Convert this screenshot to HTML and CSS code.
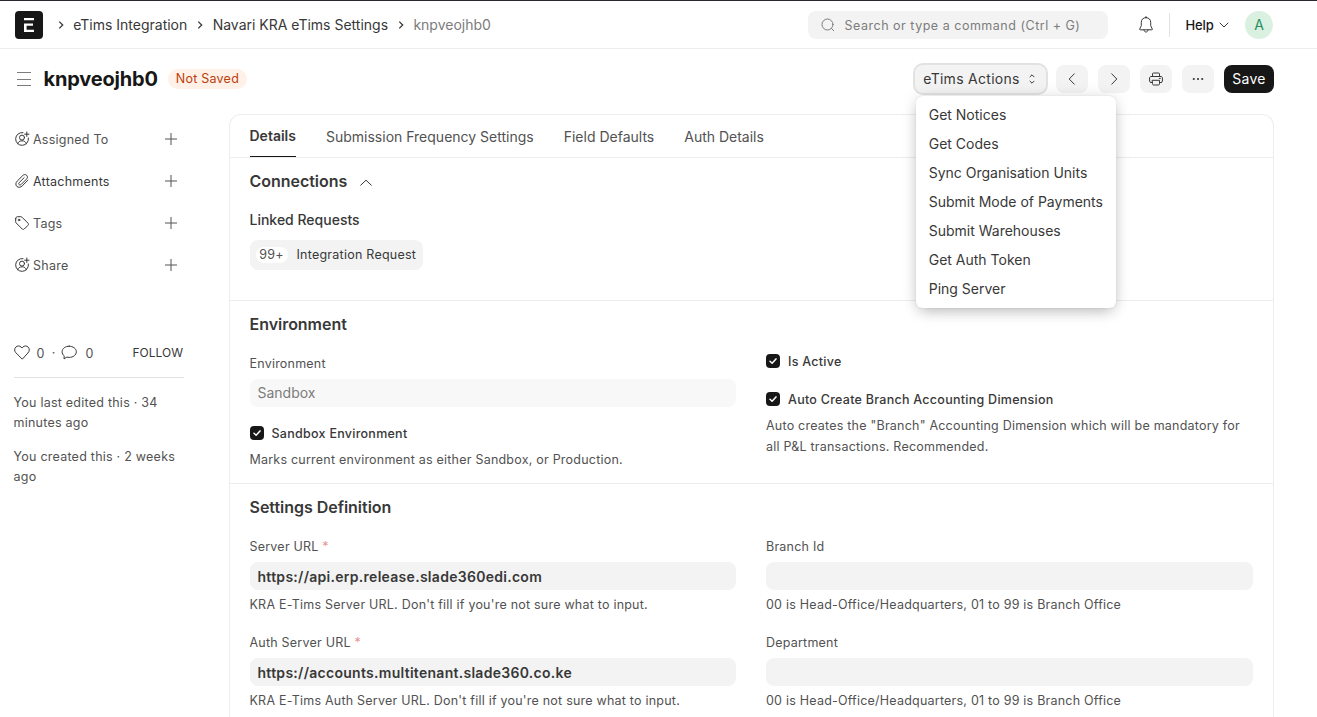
FILE: index.html
```html
<!DOCTYPE html>
<html lang="en">
<head>
<meta charset="utf-8">
<title>knpveojhb0</title>
<link rel="stylesheet" href="styles.css">
</head>
<body>
<svg class="defs" aria-hidden="true">
  <symbol id="chev" viewBox="0 0 16 16"><path d="M6.3 4.6 9.7 8l-3.4 3.4"/></symbol>
  <symbol id="plus" viewBox="0 0 14 14"><path d="M7 1v12M1 7h12"/></symbol>
  <symbol id="assign" viewBox="0 0 16 16"><path d="M9 1.6A6.4 6.4 0 1 0 14.4 7M12.8 1v4.4M10.6 3.2H15M3.6 12.8c.5-1.9 2.200-3 4.400-3s3.900 1.100 4.400 3"/><circle cx="8" cy="6.6" r="2.500"/></symbol>
  <symbol id="check" viewBox="0 0 14 14"><path d="m4 7.300 2.100 2L10 4.900"/></symbol>
</svg>
<header class="navbar">
  <div class="container nav-row">
    <svg class="logo" viewBox="0 0 28 28"><rect width="28" height="28" rx="4" fill="#171717"/><path d="M9 7h10v2.300H9zM9 12.400h9v2.300h-6.400v4H19V21H9z" fill="#fff"/></svg>
    <nav class="crumbs">
      <svg class="sep"><use href="#chev"/></svg><a>eTims Integration</a>
      <svg class="sep"><use href="#chev"/></svg><a>Navari KRA eTims Settings</a>
      <svg class="sep"><use href="#chev"/></svg><a class="current">knpveojhb0</a>
    </nav>
    <div class="search">
      <svg class="line" width="14" height="14" viewBox="0 0 14 14"><circle cx="6.500" cy="6.500" r="5.500"/><path d="m10.500 10.500 2.200 2.200"/></svg>
      <span>Search or type a command (Ctrl + G)</span>
    </div>
    <svg class="line bell" width="16" height="18" viewBox="0 0 16 18"><path d="M8 1.600c-3 0-4.700 2-4.700 4.800v3.200L1.700 13c-.2.500 0 .8.500.8h11.600c.5 0 .7-.3.500-.8l-1.600-3.400V6.400C12.700 3.600 11 1.600 8 1.600zM6 14c.2 1.300.9 2 2 2s1.800-.7 2-2M8 .6v1"/></svg>
    <div class="vline"></div>
    <div class="help">Help <svg class="line" width="10" height="6" viewBox="0 0 10 6"><path d="m1 1 4 4 4-4"/></svg></div>
    <div class="avatar">A</div>
  </div>
</header>

<div class="container page-head">
  <svg class="menu-icon" width="14" height="14" viewBox="0 0 14 14"><path d="M0 .5h14M0 7.500h14M0 13.500h14"/></svg>
  <h1>knpveojhb0</h1>
  <span class="pill">Not Saved</span>
  <div class="actions">
    <div class="dropdown">
      <button class="btn btn-open"><span>eTims Actions</span><svg class="line" width="8" height="10" viewBox="0 0 8 10"><path d="m2 2.800 2-2 2 2M2 7.200l2 2 2-2"/></svg></button>
      <ul class="menu">
        <li>Get Notices</li><li>Get Codes</li><li>Sync Organisation Units</li><li>Submit Mode of Payments</li><li>Submit Warehouses</li><li>Get Auth Token</li><li>Ping Server</li>
      </ul>
    </div>
    <button class="btn icon"><svg class="line" width="14" height="14" viewBox="0 0 14 14"><path d="M9.300 1.800 4.200 7l5.100 5.200"/></svg></button>
    <button class="btn icon"><svg class="line" width="14" height="14" viewBox="0 0 14 14"><path d="M4.700 1.800 9.800 7l-5.100 5.200"/></svg></button>
    <button class="btn icon"><svg class="line" width="14" height="14" viewBox="0 0 14 14"><path d="M3.500 4.500V2c0-.6.3-1 1-1h5c.7 0 1 .4 1 1v2.500M3.500 10.500H2c-.8 0-1.400-.5-1.400-1.300V6c0-.9.600-1.500 1.400-1.500h10c.8 0 1.400.6 1.400 1.500v3.200c0 .8-.6 1.300-1.400 1.300h-1.500M3.500 8.300h7v3.600c0 .6-.4 1.100-1 1.100h-5c-.6 0-1-.5-1-1.100zM10.300 6.400h1"/></svg></button>
    <button class="btn icon"><svg width="12" height="4" viewBox="0 0 12 4" fill="#383838"><circle cx="1.800" cy="2" r="1.100"/><circle cx="6" cy="2" r="1.100"/><circle cx="10.200" cy="2" r="1.100"/></svg></button>
    <button class="btn primary"><span>Save</span></button>
  </div>
</div>

<div class="container body">
  <aside>
    <div class="side-row"><svg class="line" width="16" height="16"><use href="#assign"/></svg><span>Assigned To</span><svg class="plus"><use href="#plus"/></svg></div>
    <div class="side-row dark"><svg class="line" width="16" height="16" viewBox="0 0 16 16"><path d="M13.900 7.200 8.200 12.900c-1.600 1.600-4 1.900-5.400.5s-1.200-3.700.4-5.300l5.600-5.600c1.100-1.100 2.800-1.300 3.900-.2s.9 2.700-.2 3.800l-5.400 5.400c-.6.600-1.500.7-2 .1s-.5-1.400.1-2l4.900-4.900"/></svg><span>Attachments</span><svg class="plus"><use href="#plus"/></svg></div>
    <div class="side-row"><svg class="line" width="16" height="16" viewBox="0 0 16 16"><path d="M1.700 3.500v3.300c0 .5.200.9.500 1.200l6 6c.6.600 1.500.6 2.100 0l3.700-3.700c.6-.6.600-1.500 0-2.100l-6-6c-.3-.3-.700-.5-1.200-.5H3.500c-1 0-1.800.8-1.800 1.800z"/><circle cx="5" cy="5" r=".8"/></svg><span>Tags</span><svg class="plus"><use href="#plus"/></svg></div>
    <div class="side-row"><svg class="line" width="16" height="16"><use href="#assign"/></svg><span>Share</span><svg class="plus"><use href="#plus"/></svg></div>
    <div class="social">
      <svg class="line" width="16" height="15" viewBox="0 0 16 15"><path d="M8 13.900 1.800 7.700C.3 6.100.3 3.600 1.800 2.100s3.900-1.500 5.400 0l.8.900.8-.9c1.500-1.500 3.900-1.500 5.400 0s1.500 4 0 5.600z"/></svg>
      <span class="likes">0</span><span class="dot">·</span>
      <svg class="line" width="16" height="15" viewBox="0 0 16 15"><path d="M8.200 1.200c4 0 7.100 2.400 7.100 5.600s-3.100 5.600-7.100 5.600c-.8 0-1.600-.1-2.300-.3L3 13.900l.2-3.100C1.800 9.800 1.100 8.400 1.100 6.800c0-3.200 3.100-5.600 7.100-5.600z"/></svg>
      <span class="comments">0</span><span class="follow">FOLLOW</span>
    </div>
    <p>You last edited this · 34 minutes ago</p>
    <p>You created this · 2 weeks ago</p>
  </aside>

  <main class="card">
    <div class="tabs"><a class="active">Details</a><a>Submission Frequency Settings</a><a>Field Defaults</a><a>Auth Details</a></div>
    <section class="connections">
      <h2>Connections <svg class="line" width="12" height="7" viewBox="0 0 12 7"><path d="m.7 6.200 5.300-5 5.300 5"/></svg></h2>
      <h3>Linked Requests</h3>
      <div class="doc-link"><span class="count">99+</span><span class="doc-name">Integration Request</span></div>
    </section>
    <section class="environment">
      <h2>Environment</h2>
      <div class="cols">
        <div>
          <label>Environment</label>
          <div class="input disabled">Sandbox</div>
          <div class="checkline first"><svg class="check"><use href="#check"/></svg>Sandbox Environment</div>
          <div class="hint">Marks current environment as either Sandbox, or Production.</div>
        </div>
        <div class="checks">
          <div class="checkline"><svg class="check"><use href="#check"/></svg>Is Active</div>
          <div class="checkline second"><svg class="check"><use href="#check"/></svg>Auto Create Branch Accounting Dimension</div>
          <div class="hint">Auto creates the "Branch" Accounting Dimension which will be mandatory for all P&amp;L transactions. Recommended.</div>
        </div>
      </div>
    </section>
    <section class="settings">
      <h2>Settings Definition</h2>
      <div class="cols">
        <div><label>Server URL <i>*</i></label><div class="input">https://api.erp.release.slade360edi.com</div><div class="hint">KRA E-Tims Server URL. Don't fill if you're not sure what to input.</div></div>
        <div><label>Branch Id</label><div class="input"></div><div class="hint">00 is Head-Office/Headquarters, 01 to 99 is Branch Office</div></div>
        <div><label>Auth Server URL <i>*</i></label><div class="input">https://accounts.multitenant.slade360.co.ke</div><div class="hint">KRA E-Tims Auth Server URL. Don't fill if you're not sure what to input.</div></div>
        <div><label>Department</label><div class="input"></div><div class="hint">00 is Head-Office/Headquarters, 01 to 99 is Branch Office</div></div>
      </div>
    </section>
  </main>
</div>
</body>
</html>
```

FILE: styles.css
```css
* { box-sizing: border-box; }
html, body { height: 717px; overflow: hidden; }
body {
  margin: 0;
  border-top: 1px solid #2a272f;
  background: #fff;
  color: #383838;
  font: 400 14px/21px Inter, sans-serif;
  letter-spacing: 0;
}
h1, h2, h3, p, ul { margin: 0; padding: 0; }
.defs { position: absolute; width: 0; height: 0; }
svg { flex: none; }
.line { fill: none; stroke: #383838; stroke-linecap: round; stroke-linejoin: round; }
.container { margin-left: 15px; width: 1259px; }

.navbar { height: 48px; border-bottom: 1px solid #ededed; }
.nav-row { display: flex; align-items: center; height: 48px; }
.logo { width: 28px; height: 28px; }
.crumbs { display: flex; align-items: center; flex: 1; padding-left: 9.500px; white-space: nowrap; }
.crumbs a { margin-right: 4.700px; padding-bottom: 2px; }
.crumbs .current { color: #7c7c7c; }
.sep { width: 16px; height: 16px; margin-right: 4.700px; fill: none; stroke: #383838; stroke-width: 1.3; }
.search { display: flex; align-items: center; gap: 10px; width: 300px; height: 28px; padding-left: 12.500px; border-radius: 8px; background: #f3f3f3; color: #7c7c7c; font-size: 12.500px; letter-spacing: 0.51px; }
.search .line { stroke: #7c7c7c; }
.bell { margin: 0 0 0 30px; }
.vline { width: 1px; height: 24px; margin: 0 15.500px 0 15px; background: #e2e2e2; }
.help { display: flex; align-items: center; gap: 5px; width: 59.500px; font-size: 13px; font-weight: 500; color: #171717; letter-spacing: -0.1px; }
.avatar { width: 28px; height: 28px; margin-right: 1px; border-radius: 50%; background: #daf0e1; color: #278f5e; text-align: center; line-height: 28px; }

.page-head { display: flex; align-items: center; height: 60px; }
.menu-icon { margin-left: 2px; stroke: #7c7c7c; fill: none; }
h1 { margin-left: 12.500px; color: #171717; font-size: 20px; font-weight: 700; line-height: 24px; letter-spacing: -0.18px; }
.pill { margin-left: 10px; padding: 0 8px; height: 20px; border-radius: 10px; background: #fff1e7; color: #bd3e0c; font-size: 12.500px; letter-spacing: 0.24px; line-height: 20px; }
.actions { display: flex; gap: 10px; margin-left: auto; }
.btn { display: flex; align-items: center; justify-content: center; height: 28px; padding: 0 8px; border: 0; border-radius: 8px; background: #f3f3f3; color: #383838; font: inherit; letter-spacing: 0.02em; white-space: nowrap; }
.btn span { padding-bottom: 2px; }
.btn.icon { width: 32px; padding: 0; }
.btn.primary { width: 50px; background: #171717; color: #fff; }
.dropdown { position: relative; width: 131px; }
.btn-open { width: 131px; padding: 0 10px 0 8px; gap: 8px; box-shadow: 0 0 0 2px #e2e2e2; }
.menu { position: absolute; z-index: 2; left: 1px; top: 31px; width: 199.500px; padding: 4px 4px 5px; border-radius: 6px; background: #fff; list-style: none; box-shadow: 0 0 1px rgba(0,0,0,.19), 0 6px 15px -4px rgba(0,0,0,.25), 0 0 16px rgba(0,0,0,.1); }
.menu li { height: 29px; padding: 0 8.700px; line-height: 29px; white-space: nowrap; }

.body { display: flex; padding-top: 5px; }
aside { width: 214px; padding-top: 4px; color: #525252; font-size: 12.500px; letter-spacing: 0.24px; }
.side-row { display: flex; align-items: center; width: 164px; height: 42px; margin-left: -1px; }
.side-row span { flex: 1; margin-left: 3px; }
.side-row.dark { color: #383838; }
.plus { width: 14px; height: 14px; stroke: #525252; fill: none; }
.social { display: flex; align-items: center; width: 170px; height: 50px; margin: 42px 0 15px -1px; border-bottom: 1px solid #e2e2e2; }
.likes, .comments { padding-top: 1px; }
.likes { margin-left: 6.500px; }
.dot { margin: 0 6px 0 7px; }
.comments { margin-left: 8px; }
.follow { margin-left: auto; padding-right: 1px; color: #383838; font-size: 12px; letter-spacing: 0; }
aside p { width: 172px; margin: 0 0 14px -1.500px; line-height: 20px; }

.card { width: 1045px; height: 610px; border: 1px solid #ededed; border-bottom: 0; border-radius: 12px 12px 0 0; }
.tabs { display: flex; gap: 30px; height: 43px; padding-left: 19.500px; border-bottom: 1px solid #ededed; color: #525252; line-height: 44px; }
.tabs .active { height: 42px; border-bottom: 1px solid #171717; color: #383838; font-weight: 600; line-height: 42px; }
section { padding: 13px 20px 0 19.500px; border-bottom: 1px solid #ededed; }
.settings { border: 0; }
h2 { display: flex; align-items: center; gap: 13px; font-size: 16px; font-weight: 600; line-height: 21px; letter-spacing: -0.03px; }
h2 svg { margin-top: 2px; }
h3 { margin-top: 17px; font-size: 14px; font-weight: 500; line-height: 21px; }
.connections { height: 143px; }
.doc-link { display: flex; align-items: center; width: 173px; height: 30px; margin-top: 10px; padding-left: 6px; border-radius: 8px; background: #f3f3f3; font-size: 12.500px; letter-spacing: 0.24px; white-space: nowrap; }
.doc-name { padding-bottom: 2px; }
.count { width: 32px; height: 16px; margin-right: 9px; border-radius: 8px; background: #fff; color: #525252; text-align: center; line-height: 16px; }
.environment { height: 183px; }
.cols { display: grid; grid-template-columns: 486.500px 487px; column-gap: 30px; padding-top: 18px; font-size: 12.500px; letter-spacing: 0.22px; }
label { display: block; height: 20px; margin-bottom: 6px; color: #525252; line-height: 22px; }
label i { color: #eb9091; font-style: normal; }
.input { height: 28px; padding: 0 8px; border-radius: 8px; background: #f3f3f3; font-size: 14px; font-weight: 600; line-height: 29px; letter-spacing: 0.02em; }
.input.disabled { background: #f8f8f8; color: #7c7c7c; font-weight: 400; line-height: 28px; letter-spacing: 0; }
.hint { color: #525252; line-height: 21px; }
.checkline { display: flex; align-items: center; gap: 8px; height: 20px; font-weight: 500; letter-spacing: 0.27px; }
.check { width: 14px; height: 14px; border-radius: 4px; background: #171717; fill: none; stroke: #fff; stroke-width: 1.5; stroke-linecap: round; stroke-linejoin: round; }
.checkline.first { margin: 16px 0 6px; }
.checkline.second { margin: 18px 0 6px; }
.checks { margin-top: -2px; }
.settings .hint { margin: 4px 0 17px; }
```
